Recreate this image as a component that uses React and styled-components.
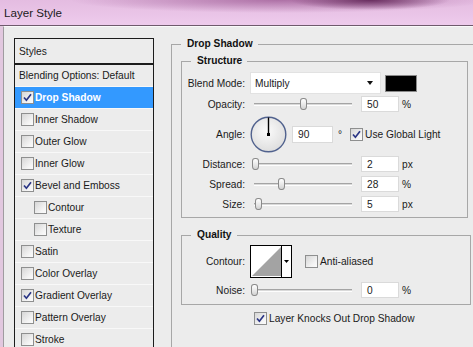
import React from "react";
import styled, { createGlobalStyle } from "styled-components";

const Global = createGlobalStyle`
  html, body { margin: 0; padding: 0; background: #ececec; overflow: hidden; }
  body { font-family: "Liberation Sans", Arial, sans-serif; font-size: 10.2px; color: #1a1a1a; }
  * { box-sizing: border-box; }
`;

/* ─── Window frame ─────────────────────────────────────────── */
const Window = styled.div`
  width: 473px; height: 347px; overflow: hidden;
  display: flex; flex-direction: column;
  background: #e2c8df;
`;

const TitleBar = styled.div`
  height: 26px; flex-shrink: 0;
  display: flex; align-items: center; padding: 0 0 1px 4px;
  border-bottom: 1px solid #6f5a6c;
  font-size: 11.6px; color: #1b1b1b;
  background:
    radial-gradient(80px 10px at 370px 0, rgba(100, 40, 90, 0.95), rgba(100, 40, 90, 0)),
    radial-gradient(210px 13px at 280px 0, rgba(150, 80, 140, 0.7), rgba(150, 80, 140, 0)),
    linear-gradient(180deg, #e4bce1 0%, #eecbec 100%);
`;

const Body = styled.div`
  flex: 1; min-height: 0;
  display: flex;
  margin-left: 3px;
  border-left: 1px solid #a09ca0;
  border-top: 1px solid #fafafa;
  background: #ececec;
`;

/* ─── Left styles list ─────────────────────────────────────── */
const LeftPanel = styled.div`
  padding: 11px 0 0 10px; flex-shrink: 0;
`;

const StylesList = styled.div`
  width: 140px;
  border: 1px solid #1c1c1c;
  display: flex; flex-direction: column;
`;

const ListHeader = styled.div`
  height: 26px; padding-left: 4px;
  display: flex; align-items: center;
  border-bottom: 2px solid #1c1c1c;
`;

const ListRow = styled.div`
  height: 22px; flex-shrink: 0;
  display: flex; align-items: center; gap: 1px;
  padding-left: ${({ $indent }) => $indent}px;
  border-bottom: 1px solid #f8f8f8;
  background: ${({ $active }) => ($active ? "#3399ff" : "transparent")};
  color: ${({ $active }) => ($active ? "#fff" : "#1a1a1a")};
  font-weight: ${({ $active }) => ($active ? 700 : 400)};
`;

/* ─── Checkbox ─────────────────────────────────────────────── */
const Box = styled.span`
  width: 13px; height: 13px; flex-shrink: 0;
  display: inline-flex; align-items: center; justify-content: center;
  border: 1px solid #8e8f8f;
  background: linear-gradient(135deg, #d6d6d6 0%, #f4f4f4 70%, #fbfbfb 100%);
  margin-left: ${({ $ml }) => $ml || 0}px;
`;

const Check = ({ on, ml }) => (
  <Box $ml={ml}>
    {on && (
      <svg width="9" height="9" viewBox="0 0 9 9">
        <path d="M1 4.5 L3.4 7.2 L8 1.2" fill="none" stroke="#2a3585" strokeWidth="1.7" />
      </svg>
    )}
  </Box>
);

/* ─── Right side groups ───────────────────────────────────── */
const RightPanel = styled.div`
  flex: 1; min-width: 0; padding-top: 10px;
`;

const Group = styled.fieldset`
  margin: ${({ $mt }) => $mt || 0}px ${({ $mr }) => $mr || 0}px 0 ${({ $ml }) => $ml || 0}px;
  width: ${({ $w }) => ($w ? `${$w}px` : "auto")};
  min-width: 0;
  min-height: ${({ $minH }) => ($minH ? `${$minH}px` : "0")};
  border: 1px solid #a7a7a7;
  padding: ${({ $pad }) => $pad};
  display: flex; flex-direction: column;
  gap: ${({ $gap }) => $gap || 0}px;
`;

const Legend = styled.legend`
  font-weight: 700; line-height: 14px;
  padding: 0 5px 0 6px; margin-left: ${({ $ml }) => $ml || 0}px;
  color: #111;
`;

const Row = styled.div`
  display: flex; align-items: center;
  height: ${({ $h }) => $h || 16}px;
  margin-bottom: ${({ $mb }) => $mb || 0}px;
`;

const Label = styled.span`
  width: 63px; flex-shrink: 0; margin-right: 5px;
  text-align: right; white-space: nowrap;
`;

const Select = styled.div`
  width: 131px; height: 22px;
  display: flex; align-items: center; justify-content: space-between;
  padding: 0 4px 0 4px;
  background: #fff; border: 1px solid #e2e2e2;
`;

const Arrow = styled.span`
  width: 0; height: 0;
  border-left: 3.5px solid transparent; border-right: 3.5px solid transparent;
  border-top: 4px solid #111;
  margin-right: ${({ $mr }) => $mr || 0}px;
`;

const Swatch = styled.div`
  width: 32px; height: 17px; margin-left: 4px;
  background: #000; border: 1px solid #8a8a8a;
`;

const Slider = styled.div`
  position: relative;
  width: 106px; height: 16px; padding: 0 4px;
  display: flex; align-items: center;
`;

const Track = styled.div`
  flex: 1; height: 3px;
  border-top: 1px solid #a4a4a4; border-bottom: 1px solid #fdfdfd;
  background: #d9d9d9;
`;

const Thumb = styled.div`
  position: absolute; top: 2px;
  width: 7px; height: 12px;
  border: 1px solid #8a8a8a; border-radius: 3px 3px 3px 3px / 3px 3px 4px 4px;
  background: linear-gradient(180deg, #ffffff 0%, #e6e6e6 60%, #d2d2d2 100%);
`;

const NumBox = styled.div`
  width: ${({ $w }) => $w || 38}px; height: ${({ $h }) => $h || 16}px;
  margin-left: 5px;
  display: flex; align-items: center; padding-left: 5px;
  background: #fff; border: 1px solid #dadada;
`;

const Unit = styled.span`
  margin-left: ${({ $ml }) => $ml || 3}px;
`;

const CheckText = styled.span`
  margin-left: 2px; white-space: nowrap;
`;

const KnockRow = styled.div`
  display: flex; align-items: center; height: 14px;
  margin-top: 6px; padding-left: 73px;
`;

/* ─── Drawings ─────────────────────────────────────────────── */
const Dial = () => (
  <svg width="37" height="37" viewBox="0 0 37 37">
    <defs>
      <radialGradient id="dialFill" cx="45%" cy="40%" r="60%">
        <stop offset="0%" stopColor="#fbfbfb" />
        <stop offset="100%" stopColor="#dedede" />
      </radialGradient>
    </defs>
    <circle cx="18.5" cy="18.5" r="17.3" fill="url(#dialFill)" stroke="#51628e" strokeWidth="1.4" />
    <line x1="18.5" y1="18.5" x2="18.5" y2="1.5" stroke="#000" strokeWidth="1.4" />
    <rect x="17" y="17" width="3" height="3" fill="#000" />
  </svg>
);

const ContourPicker = () => (
  <svg width="42" height="33" viewBox="0 0 42 33">
    <rect x="0.5" y="0.5" width="41" height="32" fill="#fff" stroke="#000" />
    <polygon points="2,31 31,2 31,31" fill="#a3a3a3" />
    <line x1="31.5" y1="1" x2="31.5" y2="32" stroke="#000" />
    <polygon points="34,15 39,15 36.5,18" fill="#000" />
  </svg>
);

const SliderField = ({ pct }) => (
  <Slider>
    <Track />
    <Thumb style={{ left: `${1 + pct * 98}px` }} />
  </Slider>
);

const LIST = [
  { name: "Drop Shadow", on: true, active: true },
  { name: "Inner Shadow" },
  { name: "Outer Glow" },
  { name: "Inner Glow" },
  { name: "Bevel and Emboss", on: true },
  { name: "Contour", indent: true },
  { name: "Texture", indent: true },
  { name: "Satin" },
  { name: "Color Overlay" },
  { name: "Gradient Overlay", on: true },
  { name: "Pattern Overlay" },
  { name: "Stroke" },
];

const SLIDERS = [
  { label: "Distance:", value: "2", unit: "px", pct: 0.015 },
  { label: "Spread:", value: "28", unit: "%", pct: 0.28 },
  { label: "Size:", value: "5", unit: "px", pct: 0.045 },
];

export default function App() {
  return (
    <Window>
      <Global />
      <TitleBar>Layer Style</TitleBar>
      <Body>
        <LeftPanel>
          <StylesList>
            <ListHeader>Styles</ListHeader>
            <ListRow $indent={4}>Blending Options: Default</ListRow>
            {LIST.map((s) => (
              <ListRow key={s.name} $indent={s.indent ? 19 : 6} $active={s.active}>
                <Check on={s.on} />
                <span>{s.name}</span>
              </ListRow>
            ))}
          </StylesList>
        </LeftPanel>

        <RightPanel>
          <Group $ml={17} $mr={-20} $minH={340} $pad="0 0 0 9px">
            <Legend>Drop Shadow</Legend>

            <Group $mt={3} $w={287} $pad="4px 0 5px 0" $gap={4}>
              <Legend $ml={9}>Structure</Legend>
              <Row $h={22} $mb={-2}>
                <Label>Blend Mode:</Label>
                <Select>
                  <span>Multiply</span>
                  <Arrow $mr={3} />
                </Select>
                <Swatch />
              </Row>
              <Row>
                <Label>Opacity:</Label>
                <SliderField pct={0.5} />
                <NumBox>50</NumBox>
                <Unit>%</Unit>
              </Row>
              <Row $h={36}>
                <Label>Angle:</Label>
                <Dial />
                <NumBox $w={41} $h={17}>90</NumBox>
                <Unit $ml={5}>°</Unit>
                <Check on ml={8} />
                <CheckText>Use Global Light</CheckText>
              </Row>
              {SLIDERS.map((s) => (
                <Row key={s.label}>
                  <Label>{s.label}</Label>
                  <SliderField pct={s.pct} />
                  <NumBox>{s.value}</NumBox>
                  <Unit>{s.unit}</Unit>
                </Row>
              ))}
            </Group>

            <Group $mt={10} $w={290} $pad="3px 0 6px 0" $gap={4}>
              <Legend $ml={9}>Quality</Legend>
              <Row $h={33}>
                <Label>Contour:</Label>
                <ContourPicker />
                <Check ml={13} />
                <CheckText>Anti-aliased</CheckText>
              </Row>
              <Row>
                <Label>Noise:</Label>
                <SliderField pct={0} />
                <NumBox>0</NumBox>
                <Unit>%</Unit>
              </Row>
            </Group>

            <KnockRow>
              <Check on />
              <CheckText>Layer Knocks Out Drop Shadow</CheckText>
            </KnockRow>
          </Group>
        </RightPanel>
      </Body>
    </Window>
  );
}
